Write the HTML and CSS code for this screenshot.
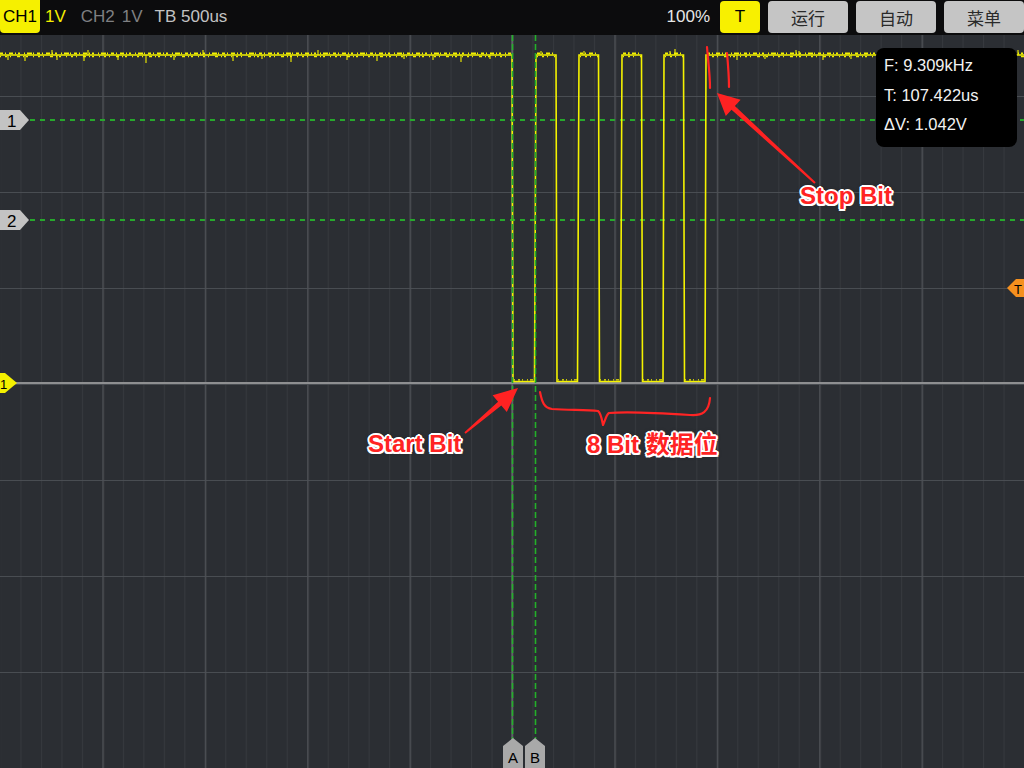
FILE: index.html
```html
<!DOCTYPE html>
<html lang="zh-CN">
<head>
<meta charset="utf-8">
<title>Oscilloscope</title>
<link rel="stylesheet" href="styles.css">
</head>
<body>
<div class="screen">
  <header class="topbar">
    <div class="status">
      <span class="ch1-tag">CH1</span>
      <span class="ch1-scale">1V</span>
      <span class="ch2-tag">CH2</span>
      <span class="ch2-scale">1V</span>
      <span class="timebase">TB 500us</span>
    </div>
    <div class="controls">
      <span class="zoom-level">100%</span>
      <button class="btn btn-trigger">T</button>
      <button class="btn">运行</button>
      <button class="btn">自动</button>
      <button class="btn">菜单</button>
    </div>
  </header>
  <main class="scope">
    <svg class="canvas" width="1024" height="733" viewBox="0 35 1024 733" xmlns="http://www.w3.org/2000/svg">
      <defs>
        <pattern id="minorV" patternUnits="userSpaceOnUse" x="0" y="0" width="20.48" height="96">
          <rect x="0" y="0" width="1" height="96" fill="#36393e"/>
        </pattern>
        <pattern id="majorV" patternUnits="userSpaceOnUse" x="0" y="0" width="102.4" height="96">
          <rect x="0" y="0" width="1.4" height="96" fill="#4d5055"/>
        </pattern>
        <pattern id="majorH" patternUnits="userSpaceOnUse" x="0" y="0" width="102.4" height="96">
          <rect x="0" y="-0.7" width="102.4" height="1.6" fill="#4d5055"/>
        </pattern>
      </defs>
      <rect x="0" y="35" width="1024" height="733" fill="#2b2e33"/>
      <rect x="1" y="35" width="1024" height="733" fill="url(#minorV)"/>
      <rect x="2" y="35" width="1024" height="733" fill="url(#majorV)"/>
      <rect x="0" y="35" width="1024" height="733" fill="url(#majorH)"/>
      <rect x="511.3" y="35" width="1.6" height="733" fill="#62656a"/>

      <!-- CH1 ground line -->
      <line x1="10" y1="383" x2="1024" y2="383" stroke="#8e8f91" stroke-width="2"/>

      <!-- channel level lines -->
      <line class="lvl" x1="30" y1="120" x2="1024" y2="120"/>
      <line class="lvl" x1="30" y1="220" x2="1024" y2="220"/>

      <!-- waveform -->
      <g class="trace">
        <path d="M0 55 H512 L513 381.5 H534.5 L536 55 H556 L557 381.5 H577.5 L579 55 H598.5 L599.5 381.5 H620.5 L622 55 H641.5 L642.5 381.5 H663 L664 55 H683.5 L684.5 381.5 H705 L706 55 H1024"/>
        <path class="noise-up" d="M0 53.4 H511 M537 53.4 H555 M580 53.4 H598 M623 53.4 H641 M665 53.4 H683 M707 53.4 H1024"/>
        <path class="noise-dn" d="M0 56.6 H511 M537 56.6 H555 M580 56.6 H598 M623 56.6 H641 M665 56.6 H683 M707 56.6 H1024"/>
        <path class="noise-low" d="M514 379.8 H534 M558 379.8 H577 M600 379.8 H620 M643 379.8 H662 M685 379.8 H704"/>
        <path class="spikes" d="M8 55 V60 M25 55 V61 M52 55 V50 M57 55 V60 M84 55 V61 M88 55 V50 M118 55 V60 M146 55 V63 M174 55 V60 M203 55 V50 M233 55 V61 M262 55 V59 M291 55 V62 M318 55 V50 M347 55 V60 M377 55 V61 M404 55 V59 M433 55 V60 M461 55 V62 M490 55 V59 M541 55 V51 M584 55 V51 M629 55 V52 M670 55 V51 M675 55 V49 M737 55 V60 M765 55 V59 M796 55 V50 M799 55 V51 M823 55 V60 M851 55 V59 M1018 55 V50"/>
      </g>

      <!-- cursors A and B -->
      <line class="cursor" x1="512.5" y1="35" x2="512.5" y2="742"/>
      <line class="cursor" x1="535.5" y1="35" x2="535.5" y2="742"/>

      <!-- channel markers -->
      <polygon points="0,110 20,110 29,120 20,130 0,130" fill="#c3c3c3"/>
      <text class="mk" x="7" y="126.5">1</text>
      <polygon points="0,210 20,210 29,220 20,230 0,230" fill="#c3c3c3"/>
      <text class="mk" x="7" y="226.5">2</text>
      <polygon points="0,373 5,373 17,383 5,393 0,393" fill="#f4f000"/>
      <text class="mk mk-small" x="0" y="388.5">1</text>
      <polygon points="1007,288 1016,279 1024,279 1024,297 1016,297" fill="#f5901e"/>
      <text class="mk mk-small" x="1014" y="293.5">T</text>
      <polygon points="503,768 503,746 513,738 523,746 523,768" fill="#a9a9a9"/>
      <text class="mk mk-ab" x="508" y="763">A</text>
      <polygon points="525,768 525,746 535,738 545,746 545,768" fill="#a9a9a9"/>
      <text class="mk mk-ab" x="530" y="763">B</text>

      <!-- hand drawn annotations -->
      <g class="ink">
        <path d="M707 47 C708 60 710 74 710 88"/>
        <path d="M727 53 C728 64 729 76 729 87"/>
        <path d="M540 392 C542 402 544 408 552 409 C570 410 588 410 598 411 C601 413 602 420 603 425 C605 421 606 415 609 413 C630 411 660 413 690 415 C702 416 709 412 710 398"/>
      </g>
      <polygon class="arrow" points="717,93 740.6,99.8 734.9,106.1 815.7,182.3 814.3,183.7 731.5,109.7 725.8,116"/>
      <polygon class="arrow" points="518,388 506.8,412 501.3,405.5 465.6,433.8 464.4,432.2 498.1,401.7 492.6,395.2"/>
    </svg>

    <div class="measure">
      <div>F: 9.309kHz</div>
      <div>T: 107.422us</div>
      <div>ΔV: 1.042V</div>
    </div>

    <div class="note note-stop">Stop Bit</div>
    <div class="note note-start">Start Bit</div>
    <div class="note note-data">8 Bit 数据位</div>
  </main>
</div>
</body>
</html>
```

FILE: styles.css
```css
* { box-sizing: border-box; }
html, body {
  margin: 0;
  padding: 0;
  background: #2b2e33;
}
.screen {
  width: 1024px;
  height: 768px;
  overflow: hidden;
  display: flex;
  flex-direction: column;
  font-family: "Liberation Sans", Arial, "Noto Sans CJK SC", sans-serif;
}
.topbar {
  height: 35px;
  flex: 0 0 35px;
  background: #0c0c0d;
  display: flex;
  justify-content: space-between;
  align-items: flex-start;
}
.status {
  display: flex;
  align-items: center;
  height: 33px;
  font-size: 17px;
}
.ch1-tag {
  background: #f6f000;
  color: #000;
  width: 40px;
  height: 33px;
  border-radius: 0 0 4px 4px;
  display: flex;
  align-items: center;
  justify-content: center;
}
.ch1-scale {
  color: #f4ee00;
  margin-left: 5px;
}
.ch2-tag {
  color: #7f8082;
  margin-left: 15px;
}
.ch2-scale {
  color: #7f8082;
  margin-left: 7px;
}
.timebase {
  color: #c2c2c2;
  margin-left: 12px;
}
.controls {
  display: flex;
  align-items: flex-start;
  gap: 8px;
  padding-top: 1px;
}
.zoom-level {
  color: #e6e6e6;
  font-size: 17px;
  height: 32px;
  line-height: 32px;
  margin-right: 2px;
}
.btn {
  border: 0;
  margin: 0;
  padding: 0;
  width: 80px;
  height: 32px;
  border-radius: 4px;
  background: #c5c5c5;
  color: #2a2a2a;
  font-family: "Liberation Sans", "Noto Sans CJK SC", sans-serif;
  font-size: 17px;
}
.btn-trigger {
  width: 40px;
  background: #f8f000;
  color: #000;
  font-size: 17px;
}
.scope {
  position: relative;
  flex: 1 1 auto;
  height: 733px;
}
.canvas {
  display: block;
}
.lvl {
  stroke: #26a82c;
  stroke-width: 2;
  stroke-dasharray: 5 5;
}
.cursor {
  stroke: #24b02a;
  stroke-width: 1.6;
  stroke-dasharray: 6 3;
}
.trace path {
  fill: none;
  stroke: #f4f200;
  stroke-width: 1.6;
}
.trace .noise-up {
  stroke-width: 1.6;
  stroke-dasharray: 3 2 1 3 4 2 1 2 2 4 1 2 5 1 1 3;
}
.trace .noise-dn {
  stroke-width: 1.4;
  stroke-dasharray: 1 4 2 3 1 6 3 3 1 2 2 5;
}
.trace .noise-low {
  stroke-width: 1.3;
  stroke-dasharray: 1 3 2 2 1 4 1 2 3 3;
}
.trace .spikes {
  stroke-width: 1.1;
}
.mk {
  font-family: "Liberation Sans", Arial, sans-serif;
  font-size: 17px;
  fill: #000;
}
.mk-small {
  font-size: 13px;
}
.mk-ab {
  font-size: 15px;
}
.ink path {
  fill: none;
  stroke: #ff2424;
  stroke-width: 2.2;
  stroke-linecap: round;
  stroke-linejoin: round;
}
.arrow {
  fill: #ff2222;
}
.measure {
  position: absolute;
  left: 876px;
  top: 13px;
  width: 141px;
  height: 99px;
  background: #000;
  border-radius: 8px;
  padding: 3px 0 0 8px;
  color: #f2f2f2;
  font-size: 16.5px;
  line-height: 29.5px;
}
.note {
  position: absolute;
  color: #ff2323;
  font-family: "Liberation Sans", Arial, "Noto Sans CJK SC", sans-serif;
  font-weight: 700;
  font-size: 24px;
  line-height: 1;
  white-space: nowrap;
  text-shadow:
    2px 0 0 #fff, -2px 0 0 #fff, 0 2px 0 #fff, 0 -2px 0 #fff,
    1.5px 1.5px 0 #fff, -1.5px 1.5px 0 #fff, 1.5px -1.5px 0 #fff, -1.5px -1.5px 0 #fff,
    0 0 4px rgba(0,0,0,0.6);
}
.note-stop { left: 800px; top: 149px; }
.note-start { left: 368px; top: 397px; }
.note-data { left: 587px; top: 398px; }
```
